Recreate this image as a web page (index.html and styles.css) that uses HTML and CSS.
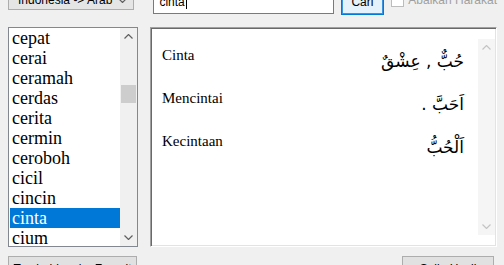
FILE: index.html
```html
<!DOCTYPE html>
<html lang="id">
<head>
    <meta charset="UTF-8">
    <meta name="viewport" content="width=device-width, initial-scale=1.0">
    <title>Kamus Indonesia - Arab</title>
    <link rel="stylesheet" href="styles.css">
</head>
<body>
    <div class="window">
        <div class="toolbar">
            <div class="combo">
                <span>Indonesia -&gt; Arab</span>
                <svg class="chevron" width="9" height="5" viewBox="0 0 9 5"><polyline points="0.5,0.5 4.5,4.5 8.5,0.5"/></svg>
            </div>
            <div class="search"><span class="caret">cinta</span></div>
            <button class="btn btn-find">Cari</button>
            <label class="check is-disabled"><span class="box"></span>Abaikan Harakat</label>
        </div>

        <div class="main">
            <div class="wordlist">
                <ul class="words">
                    <li>cepat</li>
                    <li>cerai</li>
                    <li>ceramah</li>
                    <li>cerdas</li>
                    <li>cerita</li>
                    <li>cermin</li>
                    <li>ceroboh</li>
                    <li>cicil</li>
                    <li>cincin</li>
                    <li class="is-selected">cinta</li>
                    <li>cium</li>
                </ul>
                <div class="scrollbar">
                    <div class="arrow"><svg class="chevron" width="9" height="5" viewBox="0 0 9 5"><polyline points="0.5,4.5 4.5,0.5 8.5,4.5"/></svg></div>
                    <div class="track"><div class="thumb"></div></div>
                    <div class="arrow"><svg class="chevron" width="9" height="5" viewBox="0 0 9 5"><polyline points="0.5,0.5 4.5,4.5 8.5,0.5"/></svg></div>
                </div>
            </div>

            <div class="splitter"></div>

            <div class="result">
                <div class="entries">
                    <div class="entry">
                        <span class="entry-id">Cinta</span>
                        <span class="entry-ar" dir="rtl">حُبٌّ , عِشْقٌ</span>
                    </div>
                    <div class="entry">
                        <span class="entry-id">Mencintai</span>
                        <span class="entry-ar" dir="rtl">اَحَبَّ .</span>
                    </div>
                    <div class="entry">
                        <span class="entry-id">Kecintaan</span>
                        <span class="entry-ar" dir="rtl">اَلْحُبُّ</span>
                    </div>
                </div>
                <div class="scrollbar is-disabled">
                    <div class="arrow"><svg class="chevron" width="9" height="5" viewBox="0 0 9 5"><polyline points="0.5,4.5 4.5,0.5 8.5,4.5"/></svg></div>
                    <div class="track"></div>
                    <div class="arrow"><svg class="chevron" width="9" height="5" viewBox="0 0 9 5"><polyline points="0.5,0.5 4.5,4.5 8.5,0.5"/></svg></div>
                </div>
            </div>
        </div>

        <div class="actions">
            <button class="btn btn-left">Tambahkan ke Favorit</button>
            <button class="btn btn-right">Salin Hasil</button>
        </div>
    </div>
</body>
</html>
```

FILE: styles.css
```css
html, body { height: 265px; overflow: hidden; }
body { margin: 0; background: #f0f0f0; font-family: "Liberation Sans", Arial, sans-serif; font-size: 12px; color: #000; }

.window { margin-top: -12px; padding: 0 7px 0 8px; }

/* top bar */
.toolbar { display: flex; align-items: flex-start; height: 39px; white-space: nowrap; }
.combo { box-sizing: border-box; width: 127px; height: 22px; margin-right: 19px; padding: 2px 6px 0 9px; display: flex; align-items: center; justify-content: space-between; background: #e5e5e5; border: 1px solid #adadad; }
.chevron polyline { fill: none; stroke: #606060; stroke-width: 1.2; }
.search { box-sizing: border-box; width: 181px; height: 26px; margin-right: 7px; padding: 2px 5px 0; line-height: 22px; background: #fff; border: 1px solid #7a7a7a; }
.caret { padding-right: 1px; border-right: 1px solid #000; }
.btn { box-sizing: border-box; padding: 0; font: inherit; color: #000; background: #e1e1e1; border: 1px solid #adadad; white-space: nowrap; }
.btn-find { width: 44px; height: 27px; margin-right: 7px; padding-top: 1px; background: #e5f1fb; border-color: #0078d7; box-shadow: inset 0 0 0 1px #3c93df; }
.check { display: flex; align-items: center; gap: 4px; margin-top: 5px; line-height: 14px; }
.check .box { box-sizing: border-box; width: 13px; height: 13px; background: #fff; border: 1px solid #bcbcbc; }
.check.is-disabled { color: #a0a0a0; }

/* list + result */
.main { display: flex; height: 220px; }
.wordlist { box-sizing: border-box; width: 130px; display: flex; background: #fff; border: 1px solid #828790; }
.words { flex: 1; margin: 0; padding: 0 0 0 1px; list-style: none; overflow: hidden; font-family: "Liberation Serif", serif; font-size: 18px; line-height: 20px; }
.words li { height: 20px; padding-left: 2px; white-space: nowrap; }
.words .is-selected { background: #0078d7; color: #fff; }

.scrollbar { width: 17px; display: flex; flex-direction: column; background: #f0f0f0; }
.scrollbar .arrow { height: 17px; display: flex; align-items: center; justify-content: center; }
.scrollbar .track { flex: 1; }
.thumb { height: 18px; margin: 40px 1px 0; background: #cdcdcd; }
.scrollbar.is-disabled { margin: 10px 0; background: #f5f5f5; }
.scrollbar.is-disabled polyline { stroke: #c4c4c4; }

.splitter { box-sizing: border-box; width: 12px; }

.result { flex: 1; display: flex; padding: 1px; background: #fff; border: 1px solid; border-color: #a0a0a0 #fff #fff #a0a0a0; box-shadow: inset 1px 1px 0 #696969, inset -1px -1px 0 #e3e3e3; }
.entries { flex: 1; padding: 17px 14px 0 10px; }
.entry { height: 43px; display: flex; justify-content: space-between; align-items: flex-start; }
.entry-id { font-family: "Liberation Serif", serif; font-size: 15px; line-height: 18px; }
.entry-ar { margin-top: 4px; font-family: "DejaVu Sans", sans-serif; font-size: 17px; line-height: 22px; }

/* bottom buttons */
.actions { display: flex; justify-content: space-between; margin-top: 9px; }
.actions .btn { height: 23px; padding-top: 3px; line-height: 18px; }
.btn-left { width: 129px; }
.btn-right { width: 92px; margin-right: 3px; }
```
